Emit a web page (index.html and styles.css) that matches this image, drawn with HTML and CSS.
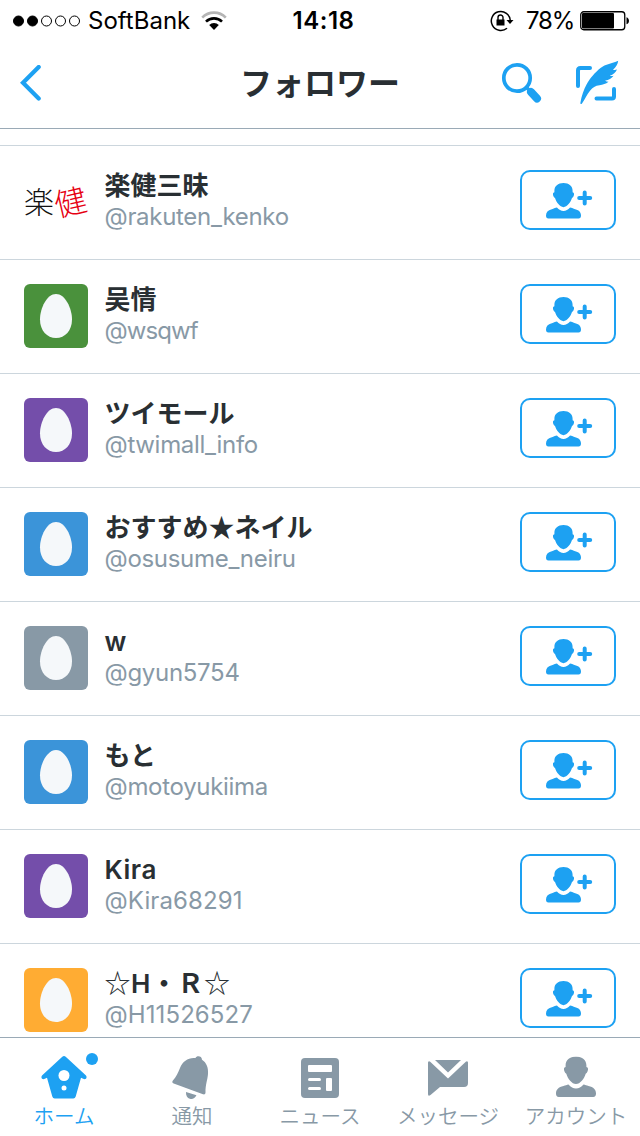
FILE: index.html
```html
<!DOCTYPE html>
<html lang="ja">
<head>
<meta charset="utf-8">
<title>フォロワー</title>
<link rel="stylesheet" href="styles.css">
</head>
<body>
<svg class="defs" width="0" height="0">
  <symbol id="egg" viewBox="0 0 64 64"><path d="M32 10c9 0 16 14 16 25.500C48 46.500 41 54 32 54s-16-7.500-16-18.500C16 24 23 10 32 10z" fill="#f5f8fa"/></symbol>
  <symbol id="person" viewBox="0 0 40 41"><path d="M20 0c6.300 0 10.400 3.700 10.400 8.800v1.800c1.900.2 2 2.300 1.200 4.200-.4 1.200-1 2-1.900 2.400-1.400 4.900-5.600 10.300-9.700 10.300s-8.300-5.400-9.700-10.300c-.9-.4-1.500-1.200-1.900-2.400-.8-1.900-.7-4 1.200-4.200V8.800C9.600 3.700 13.700 0 20 0zM12.500 28c2.300 2.800 4.700 3.900 7.500 3.900s5.200-1.100 7.500-3.900c1.800.5 3 .9 5 1.500 5 1.100 7.500 3.600 7.500 7.500 0 2.300-.9 3.500-2.800 3.500H2.800C.9 40.500 0 39.300 0 37c0-3.900 2.500-6.400 7.500-7.500 2-.6 3.200-1 5-1.500z" fill="currentColor"/></symbol>
  <symbol id="follow" viewBox="0 0 48 36"><use href="#person" x="0" y="0" width="35" height="36"/><path d="M38.700 9.500v11M33.200 15h11" stroke="currentColor" stroke-width="4" stroke-linecap="round"/></symbol>
</svg>
<div class="screen">
  <header class="status">
    <div class="status-left">
      <svg width="68" height="14" viewBox="0 0 68 14"><g stroke="#000" stroke-width="1"><circle cx="5.500" cy="7" r="5"/><circle cx="19.500" cy="7" r="5"/><g fill="none"><circle cx="33.500" cy="7" r="5"/><circle cx="47.500" cy="7" r="5"/><circle cx="61.500" cy="7" r="5"/></g></g></svg>
      <span class="carrier">SoftBank</span>
      <svg class="wifi" width="26" height="20" viewBox="0 0 26 20"><g fill="none" stroke-width="2.600"><path d="M1.200 6.600a16.500 16.500 0 0 1 23.600 0" stroke="#b5b5b5"/><path d="M5 10.700a11.300 11.300 0 0 1 16 0" stroke="#000"/></g><path d="M8.200 14a6.800 6.800 0 0 1 9.600 0L13 19z"/></svg>
    </div>
    <time class="clock">14:18</time>
    <div class="status-right">
      <svg width="24" height="22" viewBox="0 0 24 22"><path d="M20.300 10.500A9.500 9.500 0 1 0 17 18.200" fill="none" stroke="#000" stroke-width="1.500"/><path d="M16.500 10h7l-3.500 4z"/><path d="M6.500 9.500h8v6h-8z"/><path d="M8 10V7.500a2.500 2.500 0 0 1 5 0V10" fill="none" stroke="#000" stroke-width="1.400"/></svg>
      <span class="percent">78%</span>
      <svg class="battery" width="50" height="20" viewBox="0 0 50 20"><rect x=".75" y=".75" width="44" height="18" rx="3" fill="none" stroke="#000" stroke-width="1.300"/><rect x="2" y="2" width="32" height="15.500" rx="1"/><path d="M46.500 6.200c3.300 1 3.300 6.100 0 7.100z"/></svg>
    </div>
  </header>
  <nav class="navbar">
    <svg class="back" width="22" height="36" viewBox="0 0 22 36"><path d="M18.700 2L3 17.800l15.700 15.700" fill="none" stroke="#1da1f2" stroke-width="4.200" stroke-linecap="round"/></svg>
    <h1>フォロワー</h1>
    <div class="actions">
      <svg width="42" height="42" viewBox="0 0 42 42"><circle cx="16" cy="16" r="13.200" fill="none" stroke="#1da1f2" stroke-width="3.700"/><path d="M25 25l4 4" stroke="#1da1f2" stroke-width="3.500"/><path d="M30 30l6 6.500" stroke="#1da1f2" stroke-width="8" stroke-linecap="round"/></svg>
      <svg width="44" height="46" viewBox="0 0 44 46"><path d="M2 26V10.500q0-2.500 2.500-2.500H14M20.500 38.500H36q2 0 2-2V29" fill="none" stroke="#1da1f2" stroke-width="4" stroke-linecap="round"/><path d="M42.200.8C41.800 4 40 7.500 37 9.700q2 .5 4-.2c-1.200 3-3.700 5-7.200 6.300q1.700.6 3.800 0c-2 2.700-4.800 4.200-8.600 5q1.500 1 3.500 1c-2.700 2.200-5.500 2.900-9 3.400-4.200.6-6.800 2-9.500 5.500-3.200 4-5 8.300-8 12.700-.8 1-1.800.8-1.600-.6C5.500 36 7.800 29.500 10.800 24c3-5.500 8.700-12 13.700-16C29.500 4.200 36 3.500 42.200.8z" fill="#1da1f2"/></svg>
    </div>
  </nav>
  <main class="list">
    <article class="row"><div class="avatar logo"><span>楽</span><span class="red">健</span></div><div class="who"><b>楽健三昧</b><span class="snug">@rakuten_kenko</span></div><button><svg><use href="#follow"/></svg></button></article>
    <article class="row"><svg class="avatar green"><use href="#egg"/></svg><div class="who"><b>吴情</b><span class="tight">@wsqwf</span></div><button><svg><use href="#follow"/></svg></button></article>
    <article class="row"><svg class="avatar purple"><use href="#egg"/></svg><div class="who"><b>ツイモール</b><span class="snug">@twimall_info</span></div><button><svg><use href="#follow"/></svg></button></article>
    <article class="row"><svg class="avatar blue"><use href="#egg"/></svg><div class="who"><b>おすすめ<em>★</em>ネイル</b><span class="snug">@osusume_neiru</span></div><button><svg><use href="#follow"/></svg></button></article>
    <article class="row"><svg class="avatar gray"><use href="#egg"/></svg><div class="who"><b>w</b><span class="snug">@gyun5754</span></div><button><svg><use href="#follow"/></svg></button></article>
    <article class="row"><svg class="avatar blue"><use href="#egg"/></svg><div class="who"><b>もと</b><span class="snug">@motoyukiima</span></div><button><svg><use href="#follow"/></svg></button></article>
    <article class="row"><svg class="avatar purple"><use href="#egg"/></svg><div class="who"><b class="latin">Kira</b><span>@Kira68291</span></div><button><svg><use href="#follow"/></svg></button></article>
    <article class="row"><svg class="avatar orange"><use href="#egg"/></svg><div class="who"><b class="latin"><i>☆</i>H・Ｒ<i>☆</i></b><span>@H11526527</span></div><button><svg><use href="#follow"/></svg></button></article>
  </main>
  <footer class="tabs">
    <a class="tab active"><svg width="60" height="48" viewBox="0 0 60 48"><path d="M28.300 4.800q1.700-1.500 3.400 0L52 23.500q1.200 1.600.2 3-1.200 1.200-3 .3l-2.200-1-5.300 18.700q-.6 2-2.400 2H20.700q-1.800 0-2.400-2L13 25.800l-2.200 1q-1.800.9-3-.3-1-1.400.2-3z" fill="currentColor"/><circle cx="30" cy="23.500" r="5.500" fill="#fff"/><circle cx="30" cy="36" r="2.500" fill="#fff"/><circle cx="58" cy="7" r="6" fill="currentColor"/></svg><span>ホーム</span></a>
    <a class="tab"><svg width="60" height="48" viewBox="0 0 60 48"><path d="M33.500 6c1-2.700 6.500-2.300 6.500 1.700 4.600 3 6.500 8 6 14.300-.4 5.500-2.700 11-2.500 18.500 0 1.500-1 2.200-2.500 1.800L11.700 31.500c-1.400-.4-1.900-1.700-.8-3 3.300-3.500 5.100-7.500 7.100-12.500C20.800 9 26.500 5.200 33.500 6zM24 40l10.500 3.300c-1.500 3-4 4.300-6.700 3.500-2.500-.7-4-3.300-3.800-6.800z" fill="currentColor"/></svg><span>通知</span></a>
    <a class="tab"><svg width="60" height="48" viewBox="0 0 60 48"><rect x="11" y="6" width="38" height="40" rx="4" fill="currentColor"/><g fill="#fff"><rect x="18" y="13" width="24" height="7" rx="1"/><rect x="18" y="26" width="13" height="3" rx="1.500"/><rect x="18" y="35" width="13" height="3" rx="1.500"/><rect x="36" y="26" width="6" height="13" rx="1"/></g></svg><span>ニュース</span></a>
    <a class="tab"><svg width="60" height="48" viewBox="0 0 60 48"><path d="M17 8h26L30 20.500zM10 10.500q.5-2 2.200-.8L30 26.500 47.800 9.700q1.700-1.200 2.200.8V31q0 4-4 4H22l-9.500 8q-2.500 1.800-2.500-1z" fill="currentColor"/></svg><span>メッセージ</span></a>
    <a class="tab"><svg width="60" height="48" viewBox="0 0 60 48"><use href="#person" x="9.500" y="4.500" width="41" height="41"/></svg><span>アカウント</span></a>
  </footer>
</div>
</body>
</html>
```
FILE: styles.css
```css
* { box-sizing: border-box; }
body { margin: 0; background: #fff; font-family: Inter, "Noto Sans CJK JP", sans-serif; }
svg { display: block; flex: none; }
.defs { position: absolute; }
.screen { width: 640px; height: 1136px; overflow: hidden; display: flex; flex-direction: column; background: #fff; }

.status { height: 40px; flex: none; display: grid; grid-template-columns: 1fr auto 1fr; align-items: center; padding: 1px 10px 0 13px; color: #000; font-size: 24px; line-height: 40px; }
.status-left, .status-right { display: flex; align-items: center; }
.status-right { justify-content: flex-end; }
.carrier { margin-left: 7px; letter-spacing: 0; }
.wifi { margin-left: 11px; }
.clock { font-weight: 600; letter-spacing: .5px; padding-left: 4px; }
.percent { margin: 0 6px 0 12px; letter-spacing: -1.200px; }

.navbar { height: 89px; flex: none; display: grid; grid-template-columns: 1fr auto 1fr; align-items: center; padding: 0 20px 3px; border-bottom: 1px solid #9aaab6; }
h1 { margin: 2px 0 0; font-size: 32px; line-height: 40px; font-weight: 700; color: #292f33; }
.actions { display: flex; justify-content: flex-end; align-items: center; gap: 33px; }

.list { flex: 1; min-height: 0; overflow: hidden; padding-top: 16px; }
.list::before { content: ""; display: block; height: 1px; background: #ccd6dd; }
.row { height: 114px; display: flex; align-items: flex-start; padding: 24px 24px 0; border-bottom: 1px solid #ccd6dd; }
.avatar { width: 64px; height: 64px; border-radius: 6px; flex: none; }
.green { background: #4a913c; }
.purple { background: #744eaa; }
.blue { background: #3b94d9; }
.gray { background: #8899a6; }
.orange { background: #ffac33; }
.logo { display: flex; align-items: center; font-family: "Noto Sans CJK JP", sans-serif; font-weight: 300; font-size: 30px; line-height: 60px; padding-bottom: 4px; color: #111; }
.red { color: #e60012; font-size: 32px; transform: rotate(-13deg); }
.who { flex: 1; margin-left: 16.500px; display: flex; flex-direction: column; }
.who b { font-size: 26px; line-height: 32px; height: 32px; font-weight: 600; color: #292f33; white-space: nowrap; }
.who .latin { letter-spacing: .5px; }
.who i, .who em { font-style: normal; font-family: "Noto Sans CJK JP", sans-serif; line-height: 1; }
.who i { font-weight: 400; }
.who span { margin-top: -1px; font-size: 24px; line-height: 32px; letter-spacing: .1px; color: #8899a6; }
.who .snug { letter-spacing: -.3px; }
.who .tight { letter-spacing: -.900px; }
button { width: 96px; height: 60px; flex: none; padding: 0 0 0 24px; border: 2px solid #1da1f2; border-radius: 10px; background: #fff; color: #1da1f2; }
button svg { width: 48px; height: 36px; position: relative; top: 1px; }

.tabs { height: 99px; flex: none; display: grid; grid-template-columns: repeat(5, 128px); border-top: 1px solid #9aaab6; background: #fff; }
.tab { display: flex; flex-direction: column; align-items: center; padding-top: 14px; color: #8899a6; }
.tab svg { overflow: visible; }
.tab span { font-family: "Noto Sans CJK JP", sans-serif; font-size: 20.500px; line-height: 30px; font-weight: 350; white-space: nowrap; }
.active { color: #1da1f2; }
```
